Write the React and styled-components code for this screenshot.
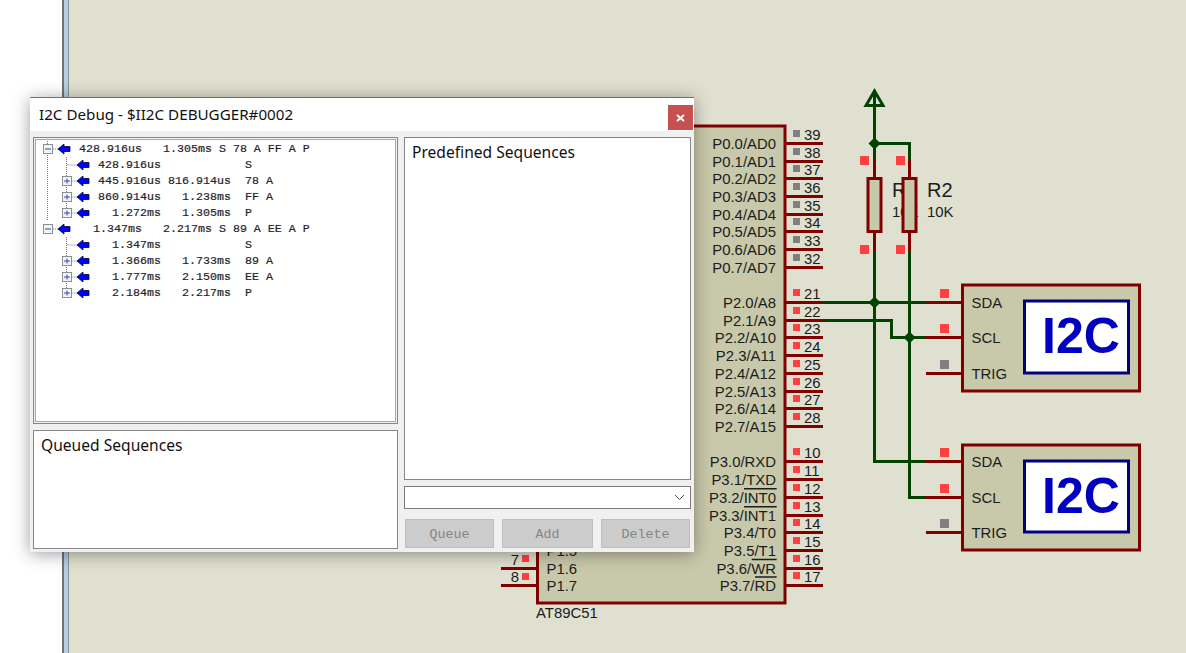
import React from 'react'
import styled, { createGlobalStyle } from 'styled-components'

const GlobalStyle = createGlobalStyle`
    html, body {
        margin: 0;
        padding: 0;
        height: 653px;
        overflow: hidden;
        background: #ffffff;
    }
`

const Page = styled.div`
    position: relative;
    display: flex;
    width: 1186px;
    height: 653px;
    overflow: hidden;
`

const LeftGutter = styled.div`
    width: 62px;
    flex: none;
    background: #ffffff;
`

const Splitter = styled.div`
    width: 7px;
    flex: none;
    box-sizing: border-box;
    background: #b4cde0;
    border-left: 2px solid #6c7479;
    border-right: 1px solid #8b9196;
`

const Sheet = styled.div`
    flex: 1;
    background: #dfe0d0;
`

const SchematicSvg = styled.svg`
    display: block;
`

const Lead = styled.path`
    fill: none;
    stroke: #800000;
    stroke-width: 3;
`

const Wire = styled.path`
    fill: none;
    stroke: #004400;
    stroke-width: 3;
`

const Junction = styled.path`
    fill: #004400;
`

const Body = styled.rect`
    fill: #c8c9aa;
    stroke: #800000;
    stroke-width: 3;
`

const Probe = styled.rect`
    fill: ${(p) => (p.$idle ? '#808080' : '#ff4040')};
`

const Label = styled.text`
    font-family: 'Liberation Sans', Arial, sans-serif;
    font-size: ${(p) => p.$size || 14.9}px;
    fill: #1c1c1c;
    text-anchor: ${(p) => (p.$end ? 'end' : 'start')};
`

const Bar = styled.path`
    fill: none;
    stroke: #1c1c1c;
    stroke-width: 1.5;
`

const ProbeScreen = styled.rect`
    fill: #ffffff;
    stroke: #000080;
    stroke-width: 3;
`

const ProbeTitle = styled.text`
    font-family: 'Liberation Sans', Arial, sans-serif;
    font-size: 50px;
    font-weight: bold;
    fill: #0000c0;
`

const Window = styled.div`
    position: absolute;
    left: 30px;
    top: 97px;
    width: 664px;
    height: 455px;
    display: flex;
    flex-direction: column;
    background: #f0f0f0;
    border-top: 1px solid #6f6f6f;
    box-sizing: border-box;
    box-shadow: 0 2px 16px rgba(0, 0, 0, 0.38);
`

const TitleBar = styled.div`
    height: 33px;
    flex: none;
    display: flex;
    align-items: flex-start;
    justify-content: space-between;
    background: #ffffff;
`

const Title = styled.div`
    margin: 6px 0 0 9px;
    font-family: 'Noto Sans', sans-serif;
    font-size: 15.2px;
    line-height: 20px;
    color: #111111;
`

const CloseButton = styled.div`
    width: 25px;
    height: 25px;
    margin: 7px 1px 0 0;
    display: flex;
    align-items: center;
    justify-content: center;
    background: #c75050;
`

const Panes = styled.div`
    flex: 1;
    display: grid;
    grid-template-columns: 365px 287px;
    column-gap: 6px;
    padding: 6px 0 0 3px;
`

const Column = styled.div`
    display: flex;
    flex-direction: column;
`

const TreePanel = styled.div`
    height: 287px;
    box-sizing: border-box;
    padding: 3px 0 0 4px;
    background: #ffffff;
    border: 1px solid #828790;
    box-shadow: inset 0 0 0 1px #f0f0f0, inset 0 0 0 2px #a9a9a9;
`

const ListPanel = styled.div`
    height: ${(p) => p.$height}px;
    margin-top: ${(p) => p.$gap || 0}px;
    box-sizing: border-box;
    padding: 4px 7px;
    background: #ffffff;
    border: 1px solid #828790;
    font-family: 'Noto Sans', sans-serif;
    font-size: 15.6px;
    line-height: 20px;
    color: #111111;
`

const Row = styled.div`
    display: flex;
    height: 16px;
    align-items: center;
`

const RowText = styled.span`
    font-family: 'Liberation Mono', 'Courier New', monospace;
    font-size: 11.67px;
    line-height: 16px;
    white-space: pre;
    color: #26222c;
    -webkit-text-stroke: 0.2px #26222c;
`

const GlyphSvg = styled.svg`
    display: block;
    flex: none;
`

const Combo = styled.div`
    height: 23px;
    margin-top: 6px;
    box-sizing: border-box;
    display: flex;
    align-items: center;
    justify-content: flex-end;
    padding-right: 5px;
    background: #ffffff;
    border: 1px solid #7a7a7a;
`

const ButtonRow = styled.div`
    display: flex;
    gap: 8px;
    margin: 10px 0 0 1px;
`

const Button = styled.div`
    width: ${(p) => p.$width}px;
    height: 29px;
    box-sizing: border-box;
    padding-top: 2px;
    display: flex;
    align-items: center;
    justify-content: center;
    background: #cccccc;
    border: 1px solid #bfbfbf;
    font-family: 'Liberation Mono', 'Courier New', monospace;
    font-size: 13.3px;
    color: #858585;
`

const P0 = [
    ['P0.0/AD0', 39, 143.5], ['P0.1/AD1', 38, 161.5], ['P0.2/AD2', 37, 178.5], ['P0.3/AD3', 36, 196.5],
    ['P0.4/AD4', 35, 214.5], ['P0.5/AD5', 34, 231.5], ['P0.6/AD6', 33, 249.5], ['P0.7/AD7', 32, 267.5],
]

const P2P3 = [
    ['P2.0/A8', 21, 302.5], ['P2.1/A9', 22, 320.5], ['P2.2/A10', 23, 337.5], ['P2.3/A11', 24, 355.5],
    ['P2.4/A12', 25, 373.5], ['P2.5/A13', 26, 391.5], ['P2.6/A14', 27, 408.5], ['P2.7/A15', 28, 426.5],
    ['P3.0/RXD', 10, 461.5], ['P3.1/TXD', 11, 479.5], ['P3.2/INT0', 12, 497.5], ['P3.3/INT1', 13, 515.5],
    ['P3.4/T0', 14, 532.5], ['P3.5/T1', 15, 550.5], ['P3.6/WR', 16, 568.5], ['P3.7/RD', 17, 585.5],
]

const OVERBARS = ['M744 488.7H776.7', 'M744 506.7H776.7', 'M751.7 559.5H776.7', 'M755 577H776.7']

const ChipPin = ({ name, num, y, idle }) => (
    <>
        <Lead d={`M785 ${y}H823`} />
        <Probe x="793" y={y - 13.5} width="7" height="7" $idle={idle} />
        <Label x="804" y={y - 4}>{num}</Label>
        <Label x="776" y={y + 5} $end>{name}</Label>
    </>
)

const Analyser = ({ top, bottom, pins }) => (
    <>
        <Body x="962.5" y={top} width="177" height={bottom - top} />
        {pins.map(([name, y, probeY, idle]) => (
            <React.Fragment key={name}>
                <Lead d={`M926 ${y}H962`} />
                <Probe x="940" y={probeY} width="9" height="9" $idle={idle} />
                <Label x="971.5" y={y + 5.5}>{name}</Label>
            </React.Fragment>
        ))}
        <ProbeScreen x="1024.5" y={top + 16} width="104" height={bottom - top - 34} />
        <ProbeTitle x="1042" y={top + 67.5}>I2C</ProbeTitle>
    </>
)

const diamond = (x, y) => `M${x - 6} ${y}L${x} ${y - 6}L${x + 6} ${y}L${x} ${y + 6}Z`

const Schematic = () => (
    <SchematicSvg width="1117" height="653" viewBox="69 0 1117 653">
        {/* microcontroller */}
        <Body x="537.5" y="126" width="247.5" height="477" />
        {P0.map(([name, num, y]) => <ChipPin key={num} name={name} num={num} y={y} idle />)}
        {P2P3.map(([name, num, y]) => <ChipPin key={num} name={name} num={num} y={y} />)}
        {OVERBARS.map((d) => <Bar key={d} d={d} />)}
        <Label x="546.5" y="555.5">P1.5</Label>
        <Label x="546.5" y="573.5">P1.6</Label>
        <Label x="546.5" y="590.5">P1.7</Label>
        <Lead d="M501 568.5H537" />
        <Lead d="M501 585.5H537" />
        <Probe x="522" y="555" width="7" height="7" />
        <Probe x="522" y="573" width="7" height="7" />
        <Label x="519" y="565" $end>7</Label>
        <Label x="519" y="582" $end>8</Label>
        <Label x="536" y="617.5">AT89C51</Label>

        {/* power rail */}
        <Wire d="M874.5 91L866 105.5H883Z" />
        <Wire d="M874.5 90V160M874.5 143.5H909.5V160" />
        <Junction d={diamond(874.5, 143.5)} />

        {/* signal wires */}
        <Wire d="M874.5 251V461.5H926" />
        <Wire d="M909.5 251V497.5H926" />
        <Wire d="M823 302.5H926" />
        <Wire d="M823 320.5H891.5V337.5H926" />
        <Junction d={diamond(874.5, 302.5)} />
        <Junction d={diamond(909.5, 337.5)} />

        {/* pull-ups */}
        <Lead d="M874.5 160V251" />
        <Body x="868" y="178.5" width="13" height="53" />
        <Label x="892" y="197" $size={20}>R1</Label>
        <Label x="892" y="216.5">10K</Label>
        <Lead d="M909.5 160V251" />
        <Body x="903" y="178.5" width="13" height="53" />
        <Label x="927" y="197" $size={20}>R2</Label>
        <Label x="927" y="216.5">10K</Label>
        <Probe x="860" y="156" width="9" height="9" />
        <Probe x="896" y="156" width="9" height="9" />
        <Probe x="860" y="245" width="9" height="9" />
        <Probe x="896" y="245" width="9" height="9" />

        {/* bus analysers */}
        <Analyser top={285} bottom={391} pins={[['SDA', 302.5, 289], ['SCL', 337.5, 324], ['TRIG', 373.5, 360, true]]} />
        <Analyser top={445} bottom={550} pins={[['SDA', 461.5, 448], ['SCL', 497.5, 484], ['TRIG', 532.5, 519, true]]} />
    </SchematicSvg>
)

const TREE = [
    { level: 0, open: true, text: '428.916us   1.305ms S 78 A FF A P', more: true },
    { level: 1, text: '428.916us            S', first: true, more: true },
    { level: 1, plus: true, text: '445.916us 816.914us  78 A', more: true },
    { level: 1, plus: true, text: '860.914us   1.238ms  FF A', more: true },
    { level: 1, plus: true, text: '  1.272ms   1.305ms  P' },
    { level: 0, open: true, text: '  1.347ms   2.217ms S 89 A EE A P' },
    { level: 1, text: '  1.347ms            S', first: true, more: true },
    { level: 1, plus: true, text: '  1.366ms   1.733ms  89 A', more: true },
    { level: 1, plus: true, text: '  1.777ms   2.150ms  EE A', more: true },
    { level: 1, plus: true, text: '  2.184ms   2.217ms  P' },
]

const Expander = ({ x, plus }) => (
    <>
        <rect x={x + 0.5} y="3.5" width="9" height="9" fill="#f4f4f4" stroke="#8a8f96" />
        <path d={`M${x + 2} 8H${x + 8}`} stroke="#2b4f9e" />
        {plus && <path d={`M${x + 5} 5.5V10.5`} stroke="#2b4f9e" />}
    </>
)

const Arrow = ({ x }) => (
    <path
        d={`M${x} 8L${x + 6} 3V5.5H${x + 12}V10.5H${x + 6}V13Z`}
        fill="#0000ff"
        stroke="#000033"
        strokeWidth="0.8"
    />
)

// one svg per row so the dotted lines join up from row to row
const TreeGlyph = ({ level, plus, more, groupOpen }) => {
    const width = level === 0 ? 41 : 60
    return (
        <GlyphSvg width={width} height="16">
            {(level === 1 ? groupOpen : more) && (
                <path d="M9.5 0V16" stroke="#777" strokeDasharray="1 1" />
            )}
            {level === 0 ? (
                <>
                    <path d="M15 8H20" stroke="#777" strokeDasharray="1 1" />
                    <Expander x={5} plus={false} />
                    <Arrow x={20} />
                </>
            ) : (
                <>
                    <path d={`M28.5 0V${more ? 16 : 8}`} stroke="#777" strokeDasharray="1 1" />
                    <path d="M28.5 8H39" stroke="#777" strokeDasharray="1 1" />
                    {plus && <Expander x={24} plus />}
                    <Arrow x={39} />
                </>
            )}
        </GlyphSvg>
    )
}

const Chevron = () => (
    <svg width="11" height="7" viewBox="0 0 11 7">
        <path d="M1 1L5.5 5.5L10 1" fill="none" stroke="#555" />
    </svg>
)

const CloseGlyph = () => (
    <svg width="9" height="8" viewBox="0 0 9 8">
        <path d="M1 1L8 7M8 1L1 7" stroke="#fff" strokeWidth="2" />
    </svg>
)

const DebugWindow = () => (
    <Window>
        <TitleBar>
            <Title>I2C Debug - $II2C DEBUGGER#0002</Title>
            <CloseButton><CloseGlyph /></CloseButton>
        </TitleBar>
        <Panes>
            <Column>
                <TreePanel>
                    {TREE.map((row, i) => (
                        <Row key={i}>
                            <TreeGlyph {...row} groupOpen={i < 5} />
                            <RowText>{row.text}</RowText>
                        </Row>
                    ))}
                </TreePanel>
                <ListPanel $height={119} $gap={6}>Queued Sequences</ListPanel>
            </Column>
            <Column>
                <ListPanel $height={343}>Predefined Sequences</ListPanel>
                <Combo><Chevron /></Combo>
                <ButtonRow>
                    <Button $width={89}>Queue</Button>
                    <Button $width={91}>Add</Button>
                    <Button $width={89}>Delete</Button>
                </ButtonRow>
            </Column>
        </Panes>
    </Window>
)

const App = () => (
    <Page>
        <GlobalStyle />
        <LeftGutter />
        <Splitter />
        <Sheet>
            <Schematic />
        </Sheet>
        <DebugWindow />
    </Page>
)

export default App
